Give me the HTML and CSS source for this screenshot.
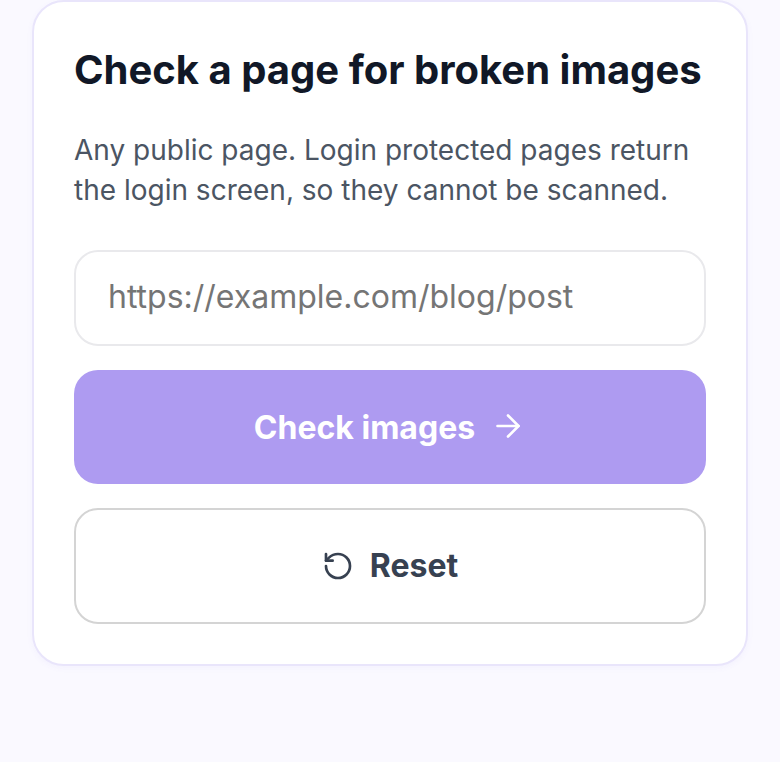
FILE: index.html
```html
<!DOCTYPE html>
<html lang="en">
<head>
    <meta charset="UTF-8">
    <meta name="viewport" content="width=device-width, initial-scale=1.0">
    <title>Broken image checker</title>
    <link rel="stylesheet" href="styles.css">
</head>
<body>
    <main class="card">
        <h1>Check a page for broken images</h1>
        <p class="hint">Any public page. Login protected pages return the login screen, so they cannot be scanned.</p>
        <input type="text" class="url-input" placeholder="https://example.com/blog/post">
        <button class="btn btn-primary">
            Check images
            <svg class="icon-arrow" width="36" height="36" viewBox="0 0 24 24" fill="none" stroke="currentColor" stroke-width="1.75" stroke-linecap="round" stroke-linejoin="round"><path d="M5 12h14"/><path d="M12 5l7 7-7 7"/></svg>
        </button>
        <button class="btn btn-secondary">
            <svg width="32" height="32" viewBox="0 0 24 24" fill="none" stroke="currentColor" stroke-width="2" stroke-linecap="round" stroke-linejoin="round"><path d="M3 12a9 9 0 1 0 9-9 9.75 9.75 0 0 0-6.74 2.74L3 8"/><path d="M3 3v5h5"/></svg>
            <span class="btn-label">Reset</span>
        </button>
    </main>
</body>
</html>
```
FILE: styles.css
```css
* {
    box-sizing: border-box;
}
body {
    margin: 0;
    padding: 0 32px;
    min-height: 762px;
    background-color: #faf9ff;
    font-family: Inter, "Liberation Sans", sans-serif;
}
.card {
    display: flex;
    flex-direction: column;
    width: 716px;
    height: 666px;
    padding: 40px;
    background-color: #fff;
    border: 2px solid #e9e5fb;
    border-radius: 32px;
    box-shadow: 0 2px 6px rgba(124, 92, 230, 0.05);
}
h1 {
    margin: 0;
    font-size: 40px;
    line-height: 56px;
    font-weight: 700;
    color: #111827;
    white-space: nowrap;
}
.hint {
    margin: 32px 0 0;
    font-size: 28px;
    line-height: 40px;
    color: #4b5563;
}
.url-input {
    width: 100%;
    height: 96px;
    margin-top: 40px;
    padding: 0 32px 3px;
    font-family: inherit;
    font-size: 32px;
    color: #111827;
    background-color: #fff;
    border: 2px solid #e9e9ec;
    border-radius: 24px;
}
.url-input::placeholder {
    color: #757575;
    opacity: 1;
}
.btn {
    display: flex;
    align-items: center;
    justify-content: center;
    gap: 16px;
    width: 100%;
    font-family: inherit;
    font-size: 32px;
    font-weight: 700;
    border-radius: 24px;
}
.btn-primary {
    gap: 15px;
    height: 114px;
    margin-top: 24px;
    color: #fff;
    background-color: #ae9bf1;
    border: 0;
}
.icon-arrow {
    margin-top: -2px;
}
.btn-secondary {
    height: 116px;
    margin-top: 24px;
    color: #374151;
    background-color: #fff;
    border: 2px solid #d4d4d4;
}
.btn-label {
    margin-bottom: 2px;
}
```
